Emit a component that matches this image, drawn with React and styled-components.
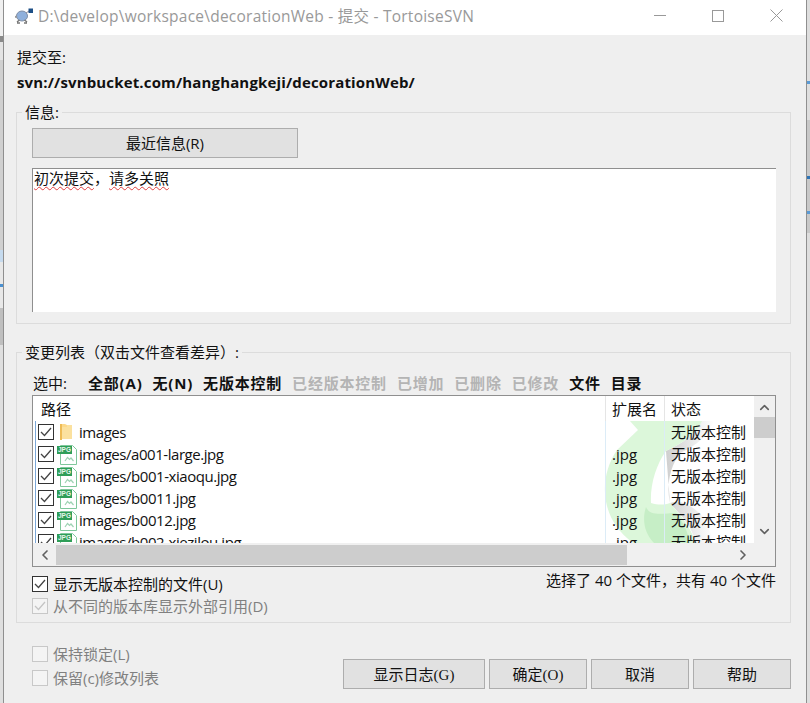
import styled, { createGlobalStyle } from 'styled-components';
import { ChevronUp, ChevronDown, ChevronLeft, ChevronRight } from 'lucide-react';

const UI_FONT = '"Open Sans", "Noto Sans CJK SC", sans-serif';

const GlobalStyle = createGlobalStyle`
  html, body {
    margin: 0;
    padding: 0;
    width: 810px;
    height: 703px;
    overflow: hidden;
    background: #fff;
    font-family: ${UI_FONT};
    font-size: 15px;
    color: #111;
  }
  * {
    box-sizing: border-box;
  }
`;

const Desktop = styled.div`
  display: flex;
  width: 810px;
  height: 703px;
  overflow: hidden;
`;

const LeftEdge = styled.div`
  width: 3px;
  background: linear-gradient(
    #f0f0f0 0 36px,
    #8a8a8a 36px 42px,
    #e4e4e4 42px 60px,
    #d0d0d0 60px 250px,
    #c5daee 250px 262px,
    #e8e8e8 262px 284px,
    #4a90d0 284px 287px,
    #e8e8e8 287px 308px,
    #bfbfbf 308px 345px,
    #dfdfdf 345px
  );
`;

const RightEdge = styled.div`
  width: 3px;
  background: linear-gradient(
    #dedede 0 81px,
    #5b9bd5 81px 84px,
    #dedede 84px 120px,
    #c8c8c8 120px 176px,
    #2f74b5 176px 179px,
    #c8c8c8 179px 211px,
    #5b9bd5 211px 214px,
    #c8c8c8 214px 233px,
    #dedede 233px
  );
`;

const Window = styled.div`
  width: 804px;
  height: 703px;
  display: flex;
  flex-direction: column;
  background: #efefef;
  border-left: 1px solid #8f8f8f;
  border-right: 1px solid #8f8f8f;
`;

const TitleBar = styled.div`
  height: 35px;
  flex: none;
  display: flex;
  align-items: center;
  background: #fff;
  padding: 0 1px 4px 11px;
`;

const TitleText = styled.div`
  flex: 1;
  margin-left: 5px;
  color: #999;
  font-size: 15.5px;
  letter-spacing: 0.24px;
  white-space: nowrap;
`;

const WinButton = styled.div`
  width: 58px;
  height: 31px;
  display: flex;
  align-items: center;
  justify-content: center;
  svg {
    display: block;
  }
`;

const Content = styled.div`
  flex: 1;
  display: flex;
  flex-direction: column;
  padding: 10px 15px 0 12px;
`;

const Label = styled.div`
  height: 24px;
  line-height: 24px;
  padding-left: 1px;
  font-size: 15px;
`;

const RepoUrl = styled.div`
  height: 26px;
  line-height: 26px;
  padding-left: 1px;
  font-size: 15px;
  font-weight: 700;
  letter-spacing: 0.15px;
  white-space: nowrap;
`;

const Group = styled.fieldset`
  margin: ${({ $top }) => $top}px 0 0;
  padding: 0 15px;
  height: ${({ $height }) => $height}px;
  border: 1px solid #dcdcdc;
  border-radius: 0;
  min-width: 0;
`;

const GroupTitle = styled.legend`
  margin-left: -10px;
  padding: 0 3px;
  font-size: 15px;
  line-height: 20px;
  height: 20px;
`;

const Button = styled.div`
  width: ${({ $width }) => $width}px;
  height: 30px;
  flex: none;
  display: flex;
  align-items: center;
  justify-content: center;
  padding-bottom: 2px;
  background: #e1e1e1;
  border: 1px solid #adadad;
  font-size: 15px;
  font-family: ${({ $serif }) => ($serif ? '"Liberation Serif", "Noto Sans CJK SC", serif' : UI_FONT)};
  white-space: nowrap;
`;

const RecentButton = styled(Button)`
  margin-top: 6px;
`;

const MessageBox = styled.div`
  margin-top: 10px;
  height: 144px;
  width: 744px;
  background: #fff;
  border-top: 1px solid #8f8f8f;
  border-left: 1px solid #8f8f8f;
  padding: 0 1px;
  font-size: 15px;
  line-height: 18px;
`;

const Misspelt = styled.span`
  text-decoration: underline wavy #e04040 1px;
  text-underline-offset: 2px;
`;

const FilterRow = styled.div`
  display: flex;
  align-items: center;
  height: 24px;
  margin-top: 8px;
  font-size: 15px;
  white-space: nowrap;
`;

const FilterLabel = styled.span`
  width: 55px;
  margin-left: 1px;
`;

const Filter = styled.span`
  margin-right: 10px;
  font-weight: 700;
  letter-spacing: 0.8px;
  color: ${({ $off }) => ($off ? '#b4b4b4' : '#111')};
`;

const ListBox = styled.div`
  position: relative;
  width: 744px;
  height: 172px;
  margin-top: 1px;
  background: #fff;
  border: 1px solid #8f8f8f;
  display: grid;
  grid-template-columns: 721px 21px;
  grid-template-rows: 147px 23px;
  overflow: hidden;
`;

const Table = styled.div`
  position: relative;
  overflow: hidden;
`;

const Watermark = styled.svg`
  position: absolute;
  left: 571px;
  top: 25px;
`;

const HeaderRow = styled.div`
  position: relative;
  display: grid;
  grid-template-columns: 573px 59px 1fr;
  height: 25px;
  line-height: 26px;
  background: #fff;
`;

const HeaderCell = styled.div`
  padding-left: ${({ $pad }) => $pad}px;
  border-right: ${({ $last }) => ($last ? 'none' : '1px solid #e5e5e5')};
`;

const Rows = styled.div`
  position: relative;
  border-left: 1px solid #7ba7d7;
  margin-left: 2px;
`;

const Row = styled.div`
  display: grid;
  grid-template-columns: 570px 59px 1fr;
  height: 22px;
  align-items: center;
  line-height: 22px;
  white-space: nowrap;
`;

const NameCell = styled.div`
  display: flex;
  align-items: center;
  height: 22px;
  letter-spacing: -0.45px;
  border-right: 1px solid #dcecf7;
`;

const TypeCell = styled.div`
  height: 22px;
  padding-left: 6px;
  border-right: 1px solid #dcecf7;
`;

const StatusCell = styled.div`
  padding-left: 6px;
`;

const FileIcon = styled.svg`
  flex: none;
  margin-left: ${({ $left }) => $left}px;
  margin-right: ${({ $right }) => $right}px;
`;

const Box = styled.span`
  flex: none;
  width: 16px;
  height: 16px;
  display: flex;
  align-items: center;
  justify-content: center;
  margin-left: ${({ $left }) => $left || 0}px;
  background: ${({ $disabled }) => ($disabled ? '#f4f4f4' : '#fff')};
  border: 1px solid ${({ $disabled }) => ($disabled ? '#c8c8c8' : '#333')};
`;

const VScroll = styled.div`
  background: #f0f0f0;
  display: flex;
  flex-direction: column;
  align-items: center;
  justify-content: space-between;
  padding-bottom: 4px;
  height: 147px;
  svg {
    color: #606060;
    flex: none;
    margin-top: 4px;
  }
`;

const VThumb = styled.div`
  width: 100%;
  height: 21px;
  background: #cdcdcd;
  margin-bottom: auto;
  margin-top: 2px;
`;

const HScroll = styled.div`
  grid-column: 1 / 3;
  background: #f0f0f0;
  display: flex;
  align-items: center;
  justify-content: space-between;
  padding-right: 24px;
  svg {
    color: #606060;
    flex: none;
  }
`;

const ScrollLeft = styled(ChevronLeft)`
  margin-left: 4px;
`;

const HThumb = styled.div`
  width: 571px;
  height: 20px;
  background: #cdcdcd;
  margin-left: 3px;
  margin-right: auto;
`;

const OptionsRow = styled.div`
  display: flex;
  justify-content: space-between;
  margin-top: 6px;
`;

const Option = styled.div`
  display: flex;
  align-items: center;
  gap: 5px;
  height: ${({ $height }) => $height || 22}px;
  line-height: 22px;
  white-space: nowrap;
  color: ${({ $disabled }) => ($disabled ? '#808080' : '#111')};
`;

const Summary = styled.div`
  margin-right: -1px;
  margin-top: -4px;
  height: 22px;
  line-height: 22px;
`;

const Footer = styled.div`
  display: flex;
  justify-content: space-between;
  margin-top: 19px;
  padding-left: 16px;
`;

const FooterButtons = styled.div`
  display: flex;
  gap: 4px;
  align-items: flex-start;
  padding-top: 17px;
`;

const Turtle = () => (
  <svg width="18" height="16" viewBox="0 0 18 16" aria-hidden="true">
    <ellipse cx="7" cy="8" rx="5.5" ry="5" fill="#8fb0dc" stroke="#7f8ea6" />
    <path d="M2 14l2.5-2M12 14l-2.5-2M2 15h3M9 15h3" stroke="#777" strokeWidth="1.5" fill="none" />
    <path d="M0 9l2-.5" stroke="#999" strokeWidth="2" />
    <path d="M11 5l3-2" stroke="#889" strokeWidth="1" />
    <rect x="13.5" y="0.5" width="4.5" height="4.5" fill="#1d4f86" />
  </svg>
);

const Folder = () => (
  <FileIcon $left={5} $right={6} width="14" height="18" viewBox="0 0 14 18" aria-hidden="true">
    <path d="M1 1h5l2 1h5v14H3l-2 1z" fill="#fcd98a" />
    <path d="M8 2h5v14H3V4h5z" fill="#fbe19f" />
    <path d="M1 1h2v16H1z" fill="#eebc57" />
  </FileIcon>
);

const JpgFile = () => (
  <FileIcon $left={3} $right={1} width="21" height="21" viewBox="0 0 21 21" aria-hidden="true">
    <path d="M3.5 1.5h12l4 4v15h-16z" fill="#fff" stroke="#7fc79b" />
    <rect x="0" y="2" width="15" height="8" fill="#2f9e58" />
    <text x="7.5" y="8.4" fontSize="6.5" fontWeight="700" textAnchor="middle" letterSpacing="0" fill="#e8f7ee" fontFamily="Liberation Sans, sans-serif">JPG</text>
    <path d="M8 17l2.5-3.5 2 2 1.5-1.5 2.5 3" fill="none" stroke="#9ed3b3" strokeWidth="1.2" />
  </FileIcon>
);

const Check = ({ color = '#444' }) => (
  <svg width="12" height="10" viewBox="0 0 12 10" aria-hidden="true">
    <path d="M1 5l3.5 3.5L11 1" fill="none" stroke={color} strokeWidth="1.3" />
  </svg>
);

const files = [
  { name: 'images', type: '', folder: true },
  { name: 'images/a001-large.jpg', type: '.jpg' },
  { name: 'images/b001-xiaoqu.jpg', type: '.jpg' },
  { name: 'images/b0011.jpg', type: '.jpg' },
  { name: 'images/b0012.jpg', type: '.jpg' },
  { name: 'images/b002-xiezilou.jpg', type: '.jpg' },
];

const filters = [
  ['全部(A)'],
  ['无(N)'],
  ['无版本控制'],
  ['已经版本控制', true],
  ['已增加', true],
  ['已删除', true],
  ['已修改', true],
  ['文件'],
  ['目录'],
];

export default function App() {
  return (
    <>
      <GlobalStyle />
      <Desktop>
        <LeftEdge />
        <Window>
          <TitleBar>
            <Turtle />
            <TitleText>D:\develop\workspace\decorationWeb - 提交 - TortoiseSVN</TitleText>
            <WinButton>
              <svg width="12" height="12" viewBox="0 0 12 12"><path d="M0 5.5h12" stroke="#999" /></svg>
            </WinButton>
            <WinButton>
              <svg width="12" height="12" viewBox="0 0 12 12"><rect x=".5" y=".5" width="11" height="11" fill="none" stroke="#999" /></svg>
            </WinButton>
            <WinButton>
              <svg width="13" height="13" viewBox="0 0 13 13"><path d="M.5.5l12 12M12.5.5l-12 12" stroke="#999" /></svg>
            </WinButton>
          </TitleBar>
          <Content>
            <Label>提交至:</Label>
            <RepoUrl>svn://svnbucket.com/hanghangkeji/decorationWeb/</RepoUrl>
            <Group $top={7} $height={222}>
              <GroupTitle>信息:</GroupTitle>
              <RecentButton $width={266}>最近信息(R)</RecentButton>
              <MessageBox>
                <Misspelt>初次提交</Misspelt>，<Misspelt>请多关照</Misspelt>
              </MessageBox>
            </Group>
            <Group $top={18} $height={281}>
              <GroupTitle>变更列表（双击文件查看差异）:</GroupTitle>
              <FilterRow>
                <FilterLabel>选中:</FilterLabel>
                {filters.map(([label, off]) => (
                  <Filter key={label} $off={off}>{label}</Filter>
                ))}
              </FilterRow>
              <ListBox>
                <Table>
                  <Watermark width="110" height="122" viewBox="0 0 110 122" aria-hidden="true">
                    <defs>
                      <linearGradient id="shadow" x1="0" x2="1" y1="0" y2="0">
                        <stop offset="0" stopColor="#cfcfcf" />
                        <stop offset="1" stopColor="#fff" />
                      </linearGradient>
                    </defs>
                    <path d="M96 0H110C104 14 94 24 76 32C66 46 62 64 66 82C78 78 92 86 102 100L110 122H92C86 100 72 90 66 82L62 30C78 22 92 14 96 0Z" fill="url(#shadow)" />
                    <path d="M26 0H98C92 14 78 22 62 30C52 44 46 64 47 82C54 84 60 84 66 82C72 90 84 100 92 122H29C10 108 2 90 1 72C0 58 4 42 13 29L34 9Z" fill="#dcf7da" />
                    <path d="M42 86C46 96 60 92 72 92C78 100 84 110 86 122H50C40 112 38 98 42 86Z" fill="#c6eec6" />
                  </Watermark>
                  <HeaderRow>
                    <HeaderCell $pad={8}>路径</HeaderCell>
                    <HeaderCell $pad={6}>扩展名</HeaderCell>
                    <HeaderCell $pad={6} $last>状态</HeaderCell>
                  </HeaderRow>
                  <Rows>
                    {files.map((file) => (
                      <Row key={file.name}>
                        <NameCell>
                          <Box $left={2}><Check /></Box>
                          {file.folder ? <Folder /> : <JpgFile />}
                          {file.name}
                        </NameCell>
                        <TypeCell>{file.type}</TypeCell>
                        <StatusCell>无版本控制</StatusCell>
                      </Row>
                    ))}
                  </Rows>
                </Table>
                <VScroll>
                  <ChevronUp size={15} strokeWidth={2.5} />
                  <VThumb />
                  <ChevronDown size={15} strokeWidth={2.5} />
                </VScroll>
                <HScroll>
                  <ScrollLeft size={16} strokeWidth={2.5} />
                  <HThumb />
                  <ChevronRight size={16} strokeWidth={2.5} />
                </HScroll>
              </ListBox>
              <OptionsRow>
                <div>
                  <Option><Box><Check /></Box>显示无版本控制的文件(U)</Option>
                  <Option $disabled><Box $disabled><Check color="#c4c4c4" /></Box>从不同的版本库显示外部引用(D)</Option>
                </div>
                <Summary>选择了 40 个文件，共有 40 个文件</Summary>
              </OptionsRow>
            </Group>
            <Footer>
              <div>
                <Option $disabled $height={24}><Box $disabled />保持锁定(L)</Option>
                <Option $disabled $height={24}><Box $disabled />保留(c)修改列表</Option>
              </div>
              <FooterButtons>
                <Button $width={142} $serif>显示日志(G)</Button>
                <Button $width={98} $serif>确定(O)</Button>
                <Button $width={98}>取消</Button>
                <Button $width={98}>帮助</Button>
              </FooterButtons>
            </Footer>
          </Content>
        </Window>
        <RightEdge />
      </Desktop>
    </>
  );
}
